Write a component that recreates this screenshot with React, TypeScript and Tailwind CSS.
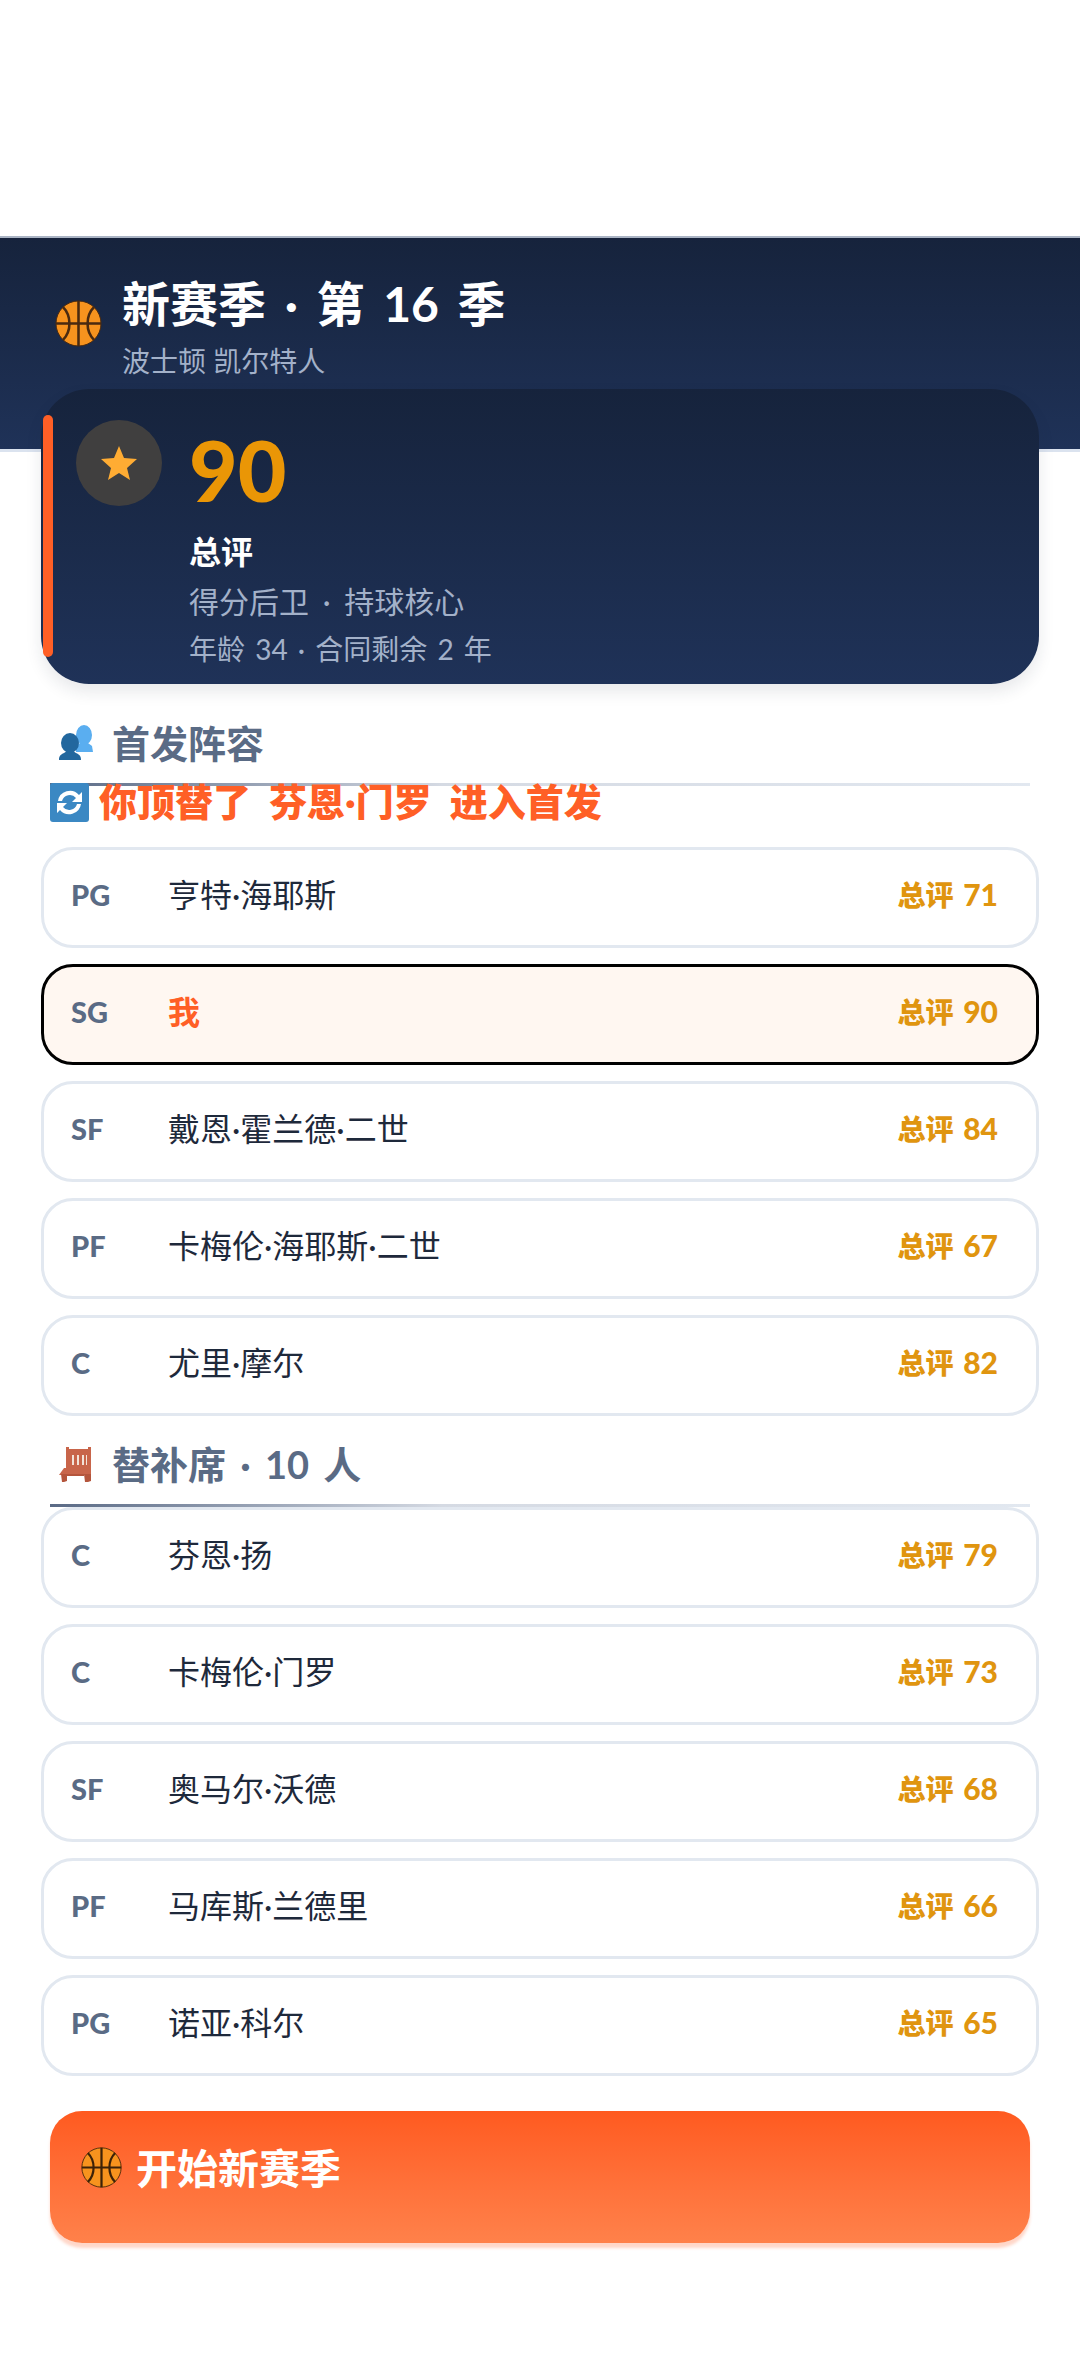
const FONT = "font-['Lato','Noto_Sans_CJK_SC',sans-serif]"

const starters = [
  { pos: 'PG', name: '亨特·海耶斯', ovr: 71 },
  { pos: 'SG', name: '我', ovr: 90, me: true },
  { pos: 'SF', name: '戴恩·霍兰德·二世', ovr: 84 },
  { pos: 'PF', name: '卡梅伦·海耶斯·二世', ovr: 67 },
  { pos: 'C', name: '尤里·摩尔', ovr: 82 },
]

const bench = [
  { pos: 'C', name: '芬恩·扬', ovr: 79 },
  { pos: 'C', name: '卡梅伦·门罗', ovr: 73 },
  { pos: 'SF', name: '奥马尔·沃德', ovr: 68 },
  { pos: 'PF', name: '马库斯·兰德里', ovr: 66 },
  { pos: 'PG', name: '诺亚·科尔', ovr: 65 },
]

function Ball({ size, stroke }: { size: number; stroke: string }) {
  return (
    <svg width={size} height={size} viewBox="0 0 48 48" className="shrink-0">
      <circle cx="24" cy="24" r="23" fill="#f7931e" stroke={stroke} strokeWidth="1" />
      <path
        d="M24 1v46M1 24h46M8 7c9 9 9 25 0 34M40 7c-9 9-9 25 0 34"
        fill="none"
        stroke={stroke}
        strokeWidth="2.6"
      />
    </svg>
  )
}

function BustsIcon() {
  return (
    <svg width="36" height="36" viewBox="0 0 36 36" className="shrink-0">
      <ellipse cx="26" cy="10" rx="8" ry="10" fill="#5aaef0" />
      <path d="M18 27v-6l4-3h8l4 3 1 6z" fill="#5aaef0" />
      <ellipse cx="12" cy="18" rx="9" ry="10" fill="#22679e" />
      <path d="M1 35c0-2 0-5 5-7l3-2h6l3 2c5 2 5 5 5 7z" fill="#22679e" />
    </svg>
  )
}

function BenchIcon() {
  return (
    <svg width="36" height="36" viewBox="0 0 36 36" className="shrink-0">
      <path d="M8 1h3v2h19V1h3v23H8z" fill="#c8654a" />
      <path d="M14 9h2v10h-2zM19 9h2v10h-2zM24 9h2v10h-2zM28 9h1v10h-1z" fill="#f2e3d8" />
      <path d="M6 22h27v7H1z" fill="#c8654a" />
      <path d="M3 28h6v7l-3 1H4zM26 28h7v7l-3 1h-3zM9 28h17v2H9z" fill="#b4553c" />
    </svg>
  )
}

function SwapIcon() {
  return (
    <svg width="39" height="39" viewBox="0 0 39 39" className="shrink-0">
      <rect width="39" height="39" rx="3" fill="#3b88c3" />
      <path d="M8 18a12 12 0 0 1 21-6l3-3v10h-10l4-4a8 8 0 0 0-14 3z" fill="#fff" />
      <path d="M31 21a12 12 0 0 1-21 6l-3 3V20h10l-4 4a8 8 0 0 0 14-3z" fill="#fff" />
    </svg>
  )
}

function PlayerRow({ pos, name, ovr, me }: { pos: string; name: string; ovr: number; me?: boolean }) {
  return (
    <div
      className={`flex h-[101px] items-center rounded-[32px] border-[3px] pl-[27px] pr-[38px] ${
        me ? 'border-black bg-[#fff7f1]' : 'border-[#e2e8f0] bg-white'
      }`}
    >
      <span className="mb-[7px] w-[97px] shrink-0 text-[29px] leading-none font-black text-[#5a6b85]">{pos}</span>
      <span className={`mb-[5px] text-[32px] leading-none ${me ? 'font-bold text-[#ff5f26]' : 'text-[#1e293b]'}`}>{name}</span>
      <span className="mb-[7px] ml-auto text-[28px] leading-none font-black text-[#e0950f] [word-spacing:3px]">
        总评 <span className="text-[30px]">{ovr}</span>
      </span>
    </div>
  )
}

function SectionTitle({ icon, children }: { icon: React.ReactNode; children: React.ReactNode }) {
  return (
    <div className="mx-[50px] h-[64px] bg-gradient-to-r from-[#5a6a85] from-0% via-[#d5dae3] via-40% to-[#e2e8f0] bg-[length:100%_3px] bg-bottom bg-no-repeat">
      <div className="flex -translate-y-[2px] items-center gap-[18px] pl-[8px]">
        {icon}
        <span className="text-[38px] leading-[46px] font-bold text-[#5a6b85] [word-spacing:5px]">{children}</span>
      </div>
    </div>
  )
}

export default function App() {
  return (
    <div className={`${FONT} min-h-[2375px] w-[1080px] bg-white`}>
      <div className="h-[236px]" />

      <header className="h-[213px] border-t-2 border-[#aab4c4] bg-gradient-to-b from-[#16233c] to-[#1f3258] pt-[33px] pl-[55px] shadow-[0_3px_0_#dbe3ef]">
        <div className="flex items-center gap-[20px]">
          <div className="mb-[6px]">
            <Ball size={47} stroke="#4a2a10" />
          </div>
          <div>
            <h1 className="text-[48px] leading-[66px] font-bold text-white [word-spacing:7px]">新赛季 · 第 16 季</h1>
            <p className="mt-[4px] text-[28px] leading-[40px] text-[#a3b1c9]">波士顿 凯尔特人</p>
          </div>
        </div>
      </header>

      <section className="relative mx-[41px] -mt-[60px] flex h-[295px] gap-[27px] rounded-[48px] bg-gradient-to-b from-[#16233c] to-[#1f3258] pt-[31px] pl-[35px] shadow-[0_8px_16px_rgba(30,41,59,0.1)]">
        <div className="absolute top-[26px] left-[2px] h-[242px] w-[10px] rounded-full bg-[#ff5f26]" />
        <div className="flex h-[86px] w-[86px] shrink-0 items-center justify-center rounded-full bg-[#403f3f]">
          <svg width="38" height="36" viewBox="0 0 38 36">
            <path d="M19 1l5 12 13 1-10 9 3 12-11-7-11 7 3-12L1 14l13-1z" fill="#ffac33" />
          </svg>
        </div>
        <div>
          <div className="text-[84px] leading-[100px] font-black text-[#ea9606]">90</div>
          <div className="mt-[10px] text-[32px] leading-[44px] font-bold text-white">总评</div>
          <div className="mt-[5px] text-[30px] leading-[44px] text-[#a3b1c9] [word-spacing:6px]">得分后卫 · 持球核心</div>
          <div className="mt-[4px] text-[28px] leading-[44px] text-[#a3b1c9] [word-spacing:3px]">年龄 34 · 合同剩余 2 年</div>
        </div>
      </section>

      <div className="mt-[38px]">
        <SectionTitle icon={<BustsIcon />}>首发阵容</SectionTitle>
      </div>

      <div className="relative mx-[50px] -mt-[3px] flex h-[64px] items-start gap-[10px]">
        <SwapIcon />
        <span className="text-[38px] leading-[36px] font-black text-[#ff5f26] [word-spacing:9px]">你顶替了 芬恩·门罗 进入首发</span>
      </div>

      <div className="mx-[41px] flex flex-col gap-[16px]">
        {starters.map(p => (
          <PlayerRow key={p.pos} {...p} />
        ))}
      </div>

      <div className="mt-[27px]">
        <SectionTitle icon={<BenchIcon />}>替补席 · 10 人</SectionTitle>
      </div>

      <div className="mx-[41px] flex flex-col gap-[16px]">
        {bench.map(p => (
          <PlayerRow key={p.name} {...p} />
        ))}
      </div>

      <button className="mx-[50px] mt-[35px] flex h-[132px] w-[980px] items-start gap-[14px] rounded-[32px] bg-gradient-to-b from-[#ff5a1f] to-[#ff814a] pt-[36px] pl-[31px] shadow-[0_5px_3px_rgba(255,95,38,0.25)]">
        <Ball size={41} stroke="#3d2208" />
        <span className="text-[41px] leading-[44px] font-bold text-white">开始新赛季</span>
      </button>
    </div>
  )
}
